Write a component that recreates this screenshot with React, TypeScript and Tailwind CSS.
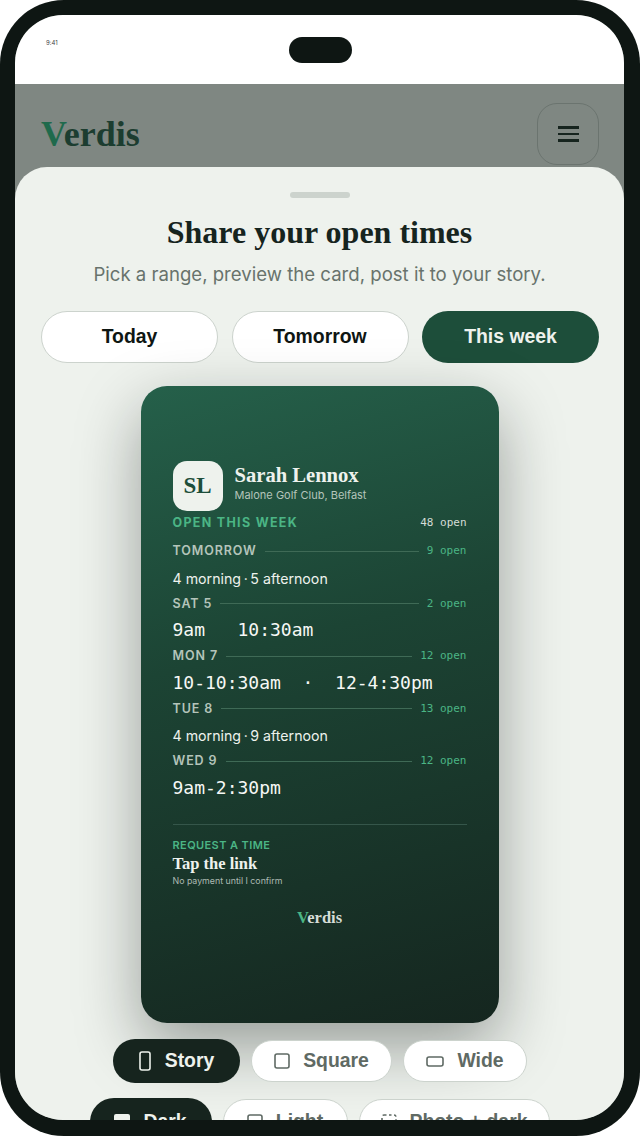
const serif = "font-['Liberation_Serif',serif]";
const sans = "font-['Inter',sans-serif]";
const mono = "font-['DejaVu_Sans_Mono',monospace]";
const arial = "font-['Liberation_Sans',Arial,sans-serif]";

function Row({ day, count, children }: { day: string; count: string; children: React.ReactNode }) {
  return (
    <div className="flex flex-col">
      <div className="flex items-center h-[14px] gap-[8px]">
        <span className={`${sans} text-[12.5px] leading-[14px] font-semibold tracking-[0.9px] text-[#b4c4ba]`}>{day}</span>
        <span className="flex-1 h-px bg-[#3f6a56]" />
        <span className={`${mono} text-[11px] leading-[14px] text-[#4bb585] whitespace-pre`}>{count} open</span>
      </div>
      <div className="mt-[7.5px]">{children}</div>
    </div>
  );
}

function Summary({ text }: { text: string }) {
  return <div className={`${sans} h-[26px] text-[14.2px] leading-[25px] text-[#eef2ed] whitespace-pre`}>{text}</div>;
}

function Times({ text }: { text: string }) {
  return <div className={`${mono} h-[26px] text-[18px] leading-[24px] text-[#f6f8f5] whitespace-pre`}>{text}</div>;
}

function Chip({ label, active, icon, h = "h-[42px]", w, gap = "gap-[13px]" }: { label: string; active?: boolean; icon: React.ReactNode; h?: string; w: string; gap?: string }) {
  return (
    <div
      className={`${arial} ${h} ${w} ${gap} shrink-0 rounded-full flex items-center justify-center text-[19.4px] font-bold ${
        active ? "bg-[#16241e] text-[#eef2ed]" : "bg-white border-[1.5px] border-[#ccd3cd] text-[#5f6a64]"
      }`}
    >
      {icon}
      <span>{label}</span>
    </div>
  );
}

export default function App() {
  return (
    <div className="w-[640px] h-[1136px] bg-white overflow-hidden">
      <div className="w-full h-full rounded-[64px] bg-[#0e1613] pt-[15px] pb-[16px] pl-[15px] pr-[16px]">
        <div className="relative w-full h-full rounded-[48px] overflow-hidden bg-[#7f8782]">
          <div className="h-[69px] bg-white pt-[24px] pl-[31px] relative">
            <span className={`${sans} block text-[6px] leading-[8px] text-[#444]`}>9:41</span>
            <div className="absolute left-[274px] top-[22px] w-[63px] h-[26px] rounded-full bg-[#0e1613]" />
          </div>
          <div className="flex justify-between pl-[26px] pr-[25px] pt-[19px]">
            <div className={`${serif} mt-[11px] text-[36px] leading-[40px] font-bold text-[#1c3d30]`}>
              <span className="text-[#1f6a4c]">V</span>erdis
            </div>
            <div className="w-[62px] h-[62px] rounded-[20px] border border-[#6b746f] flex flex-col items-center justify-center gap-[4px]">
              <span className="w-[21px] h-[2.5px] bg-[#16241e]" />
              <span className="w-[21px] h-[2.5px] bg-[#16241e]" />
              <span className="w-[21px] h-[2.5px] bg-[#16241e]" />
            </div>
          </div>

          <div className="absolute left-0 right-0 top-[152px] bottom-0 bg-[#eef2ed] rounded-t-[32px] flex flex-col items-center">
            <div className="mt-[25px] w-[60px] h-[6px] shrink-0 rounded-full bg-[#ccd3cd]" />
            <h1 className={`${serif} shrink-0 mt-[14px] text-[32px] leading-[40px] font-bold text-[#16241e]`}>Share your open times</h1>
            <p className={`${sans} shrink-0 mt-[9px] text-[18.6px] leading-[26px] text-[#68736c]`}>Pick a range, preview the card, post it to your story.</p>
            <div className={`${arial} shrink-0 mt-[24px] ml-[1px] w-[558px] grid grid-cols-3 gap-[13.5px] text-[19.4px] font-bold`}>
              <div className="h-[52px] rounded-full bg-white border-[1.5px] border-[#ccd3cd] flex items-center justify-center text-[#0e1613]">Today</div>
              <div className="h-[52px] rounded-full bg-white border-[1.5px] border-[#ccd3cd] flex items-center justify-center text-[#0e1613]">Tomorrow</div>
              <div className="h-[52px] rounded-full bg-[#1d4e3a] flex items-center justify-center text-[#eef2ed]">This week</div>
            </div>

            <div className="mt-[23px] w-[358px] h-[637px] shrink-0 rounded-[26px] bg-[linear-gradient(165deg,#25604a_0%,#1c4434_40%,#15261f_100%)] shadow-[0_24px_64px_rgba(14,22,19,0.38)] px-[32px] pt-[75px]">
              <div className="flex items-center gap-[12px]">
                <div className={`${serif} w-[50px] h-[50px] rounded-[14px] bg-[#eef2ed] flex items-center justify-center text-[23px] font-bold text-[#1d4e3a]`}>SL</div>
                <div className="flex flex-col -mt-[7px]">
                  <span className={`${serif} text-[20.6px] leading-[26px] font-bold text-[#eef2ed]`}>Sarah Lennox</span>
                  <span className={`${sans} text-[11px] leading-[15px] text-[#b4c4ba]`}>Malone Golf Club, Belfast</span>
                </div>
              </div>
              <div className="mt-[4px] flex items-center justify-between h-[16px]">
                <span className={`${sans} text-[12.5px] leading-[16px] font-bold tracking-[1.3px] text-[#4bb585]`}>OPEN THIS WEEK</span>
                <span className={`${mono} text-[11px] leading-[14px] text-[#d5ddd7] whitespace-pre`}>48 open</span>
              </div>
              <div className="mt-[13px] flex flex-col gap-[5px]">
                <Row day="TOMORROW" count="9"><Summary text={"4 morning\u2009·\u20095 afternoon"} /></Row>
                <Row day="SAT 5" count="2"><Times text="9am   10:30am" /></Row>
                <Row day="MON 7" count="12"><Times text="10-10:30am  ·  12-4:30pm" /></Row>
                <Row day="TUE 8" count="13"><Summary text={"4 morning\u2009·\u20099 afternoon"} /></Row>
                <Row day="WED 9" count="12"><Times text="9am-2:30pm" /></Row>
              </div>
              <div className="mt-[22px] h-px bg-[#35564a]" />
              <div className={`${sans} mt-[13px] text-[11px] leading-[14px] font-semibold tracking-[0.4px] text-[#4bb585]`}>REQUEST A TIME</div>
              <div className={`${serif} mt-[1px] text-[16.5px] leading-[22px] font-bold text-[#eef2ed]`}>Tap the link</div>
              <div className={`${sans} text-[8.8px] leading-[12px] text-[#aebbb3]`}>No payment until I confirm</div>
              <div className={`${serif} mt-[21px] text-center text-[16.5px] leading-[20px] font-bold text-[#d5ddd7]`}>
                <span className="text-[#4bb585]">V</span>erdis
              </div>
            </div>

            <div className="mt-[16px] h-[44px] pl-[1px] flex items-center gap-[11px] shrink-0">
              <Chip active label="Story" h="h-[44px]" w="w-[127px]" gap="gap-[14px]" icon={
                <svg width="12" height="20" viewBox="0 0 12 20" fill="none" stroke="#eef2ed" strokeWidth="1.6"><rect x="1" y="1" width="10" height="18" rx="2" /></svg>
              } />
              <Chip label="Square" w="w-[141px]" icon={
                <svg width="16" height="16" viewBox="0 0 16 16" fill="none" stroke="#5f6a64" strokeWidth="1.6"><rect x="1" y="1" width="14" height="14" rx="2" /></svg>
              } />
              <Chip label="Wide" w="w-[124px]" icon={
                <svg width="18" height="11" viewBox="0 0 18 11" fill="none" stroke="#5f6a64" strokeWidth="1.6"><rect x="1" y="1" width="16" height="9" rx="2" /></svg>
              } />
            </div>
            <div className="mt-[15px] h-[48px] flex items-center gap-[11px] shrink-0">
              <Chip active label="Dark" h="h-[48px]" w="w-[122px]" icon={
                <svg width="16" height="16" viewBox="0 0 16 16" fill="#eef2ed"><rect x="0" y="0" width="16" height="16" rx="2" /></svg>
              } />
              <Chip label="Light" h="h-[46px]" w="w-[125px]" icon={
                <svg width="16" height="16" viewBox="0 0 16 16" fill="none" stroke="#5f6a64" strokeWidth="1.6"><rect x="1" y="1" width="14" height="14" rx="2" /></svg>
              } />
              <Chip label="Photo + dark" h="h-[46px]" w="w-[191px]" icon={
                <svg width="16" height="16" viewBox="0 0 16 16" fill="none" stroke="#5f6a64" strokeWidth="1.6" strokeDasharray="2.5 2.5"><rect x="1" y="1" width="14" height="14" rx="2" /></svg>
              } />
            </div>
          </div>
        </div>
      </div>
    </div>
  );
}
